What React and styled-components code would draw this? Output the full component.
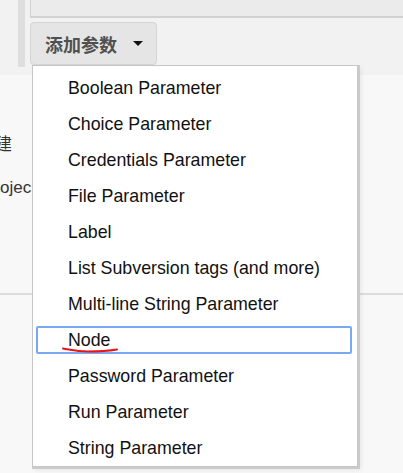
import styled, { createGlobalStyle } from "styled-components";

const GlobalStyle = createGlobalStyle`
  body {
    margin: 0;
    background: #f8f8f8;
    font-family: "Liberation Sans", Arial, sans-serif;
  }
`;

const Page = styled.div`
  position: relative;
  width: 403px;
  height: 473px;
  overflow: hidden;
  background: #f8f8f8;
`;

const Header = styled.div`
  display: flex;
  height: 75px;
  background: #f2f2f2;
`;

const Rail = styled.div`
  width: 7px;
  height: 67px;
  margin-left: 18px;
  margin-right: 5px;
  background: #dedede;
`;

const HeaderMain = styled.div`
  flex: 1;
  display: flex;
  flex-direction: column;
  gap: 4px;
`;

const TopBox = styled.div`
  height: 16px;
  background: #ebebeb;
  border-left: 1px solid #d2d2d2;
  border-bottom: 2px solid #d2d2d2;
`;

const AddButton = styled.button`
  display: flex;
  align-items: center;
  width: 127px;
  height: 43px;
  padding: 0 0 0 14px;
  background: #e5e5e5;
  border: 1px solid #d4d4d4;
  border-radius: 4px;
  color: #505050;
  font-family: "Noto Sans CJK SC", sans-serif;
  font-size: 18px;
  font-weight: 700;
  cursor: pointer;
`;

const Caret = styled.span`
  width: 0;
  height: 0;
  margin-left: 16px;
  border-left: 5px solid transparent;
  border-right: 5px solid transparent;
  border-top: 5px solid #111;
`;

const Body = styled.div`
  padding-top: 58px;
`;

const Line = styled.div`
  height: 24px;
  line-height: 24px;
  margin-left: ${(p) => p.$shift}px;
  margin-bottom: ${(p) => p.$gap}px;
  color: #333;
  font-size: 17px;
  font-family: "Liberation Sans", "Noto Sans CJK SC", sans-serif;
  white-space: nowrap;
`;

const Rule = styled.div`
  height: 2px;
  margin-top: 93px;
  background: #dcdcdc;
`;

const Menu = styled.ul`
  position: absolute;
  top: 65px;
  left: 32px;
  width: 324px;
  margin: 0;
  padding: 4px 0 0;
  list-style: none;
  background: #fff;
  border: 1px solid #c6c6c6;
  box-shadow: 1px 1px 0 1px #cbcbcb, 3px 3px 5px rgba(0, 0, 0, 0.08);
`;

const Item = styled.li`
  position: relative;
  height: 36px;
  padding: 4px 5px 4px 3px;
  box-sizing: border-box;
`;

const ItemLabel = styled.span`
  display: flex;
  align-items: center;
  height: 28px;
  box-sizing: border-box;
  padding-left: 30px;
  border: 2px solid ${(p) => (p.$focused ? "#79a9f2" : "transparent")};
  border-radius: 2px;
  color: #111;
  font-size: 17.8px;
  white-space: nowrap;
`;

const Scribble = styled.svg`
  position: absolute;
  left: 29px;
  top: 25px;
  width: 56px;
  height: 6px;
  overflow: visible;
`;

const items = [
  "Boolean Parameter",
  "Choice Parameter",
  "Credentials Parameter",
  "File Parameter",
  "Label",
  "List Subversion tags (and more)",
  "Multi-line String Parameter",
  "Node",
  "Password Parameter",
  "Run Parameter",
  "String Parameter",
];

export default function App() {
  return (
    <Page>
      <GlobalStyle />
      <Header>
        <Rail />
        <HeaderMain>
          <TopBox />
          <AddButton>
            添加参数
            <Caret />
          </AddButton>
        </HeaderMain>
      </Header>
      <Body>
        <Line $shift={-22} $gap={19}>构建</Line>
        <Line $shift={-17} $gap={0}>Projec</Line>
        <Rule />
      </Body>
      <Menu>
        {items.map((name) => (
          <Item key={name}>
            <ItemLabel $focused={name === "Node"}>{name}</ItemLabel>
            {name === "Node" && (
              <Scribble viewBox="0 0 56 6">
                <path
                  d="M1 1.5 C 8 2.5, 14 4.5, 26 4.5 S 46 4, 55 2.5"
                  fill="none"
                  stroke="#e8141b"
                  strokeWidth="2"
                  strokeLinecap="round"
                />
              </Scribble>
            )}
          </Item>
        ))}
      </Menu>
    </Page>
  );
}
